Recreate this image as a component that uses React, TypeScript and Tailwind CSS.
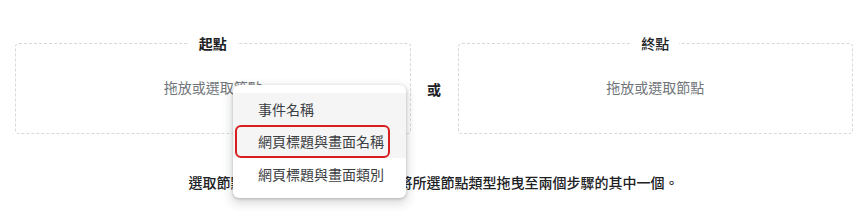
import React from "react";

const font = { fontFamily: '"Noto Sans CJK TC", "Noto Sans", sans-serif' };

function DropBox({ label, bold }: { label: string; bold?: boolean }) {
  return (
    <fieldset className="flex-1 rounded border border-dashed border-[#d6d8db] h-[101px]">
      <legend
        className={`mx-auto px-[10px] text-[14px] leading-[20px] text-[#202124] ${
          bold ? "font-bold" : "font-medium"
        }`}
      >
        {label}
      </legend>
      <div className="flex h-[80px] items-center justify-center pb-[12px] text-[14px] text-[#70757a]">
        拖放或選取節點
      </div>
    </fieldset>
  );
}

export default function App() {
  return (
    <div className="relative h-[219px] w-[867px] overflow-hidden bg-white" style={font}>
      <div className="flex items-start pl-[15px] pr-[14px] pt-[33px]">
        <DropBox label="起點" bold />
        <div className="flex w-[47px] shrink-0 justify-center pt-[46px] text-[14px] font-bold text-[#202124]">
          或
        </div>
        <DropBox label="終點" />
      </div>
      <p className="mt-[38px] text-center text-[14px] font-medium leading-[20px] text-[#202124]">
        選取節點類型後點選任一步驟，或將所選節點類型拖曳至兩個步驟的其中一個。
      </p>

      {/* dropdown menu over the start box */}
      <div className="absolute left-[233px] top-[85px] w-[173px] rounded-md bg-white py-2 text-[14px] text-[#3c4043] shadow-[0_1px_3px_rgba(60,64,67,0.3),0_4px_8px_3px_rgba(60,64,67,0.15)]">
        <div className="flex h-[32px] items-center bg-[#f5f5f5] pl-[25px]">事件名稱</div>
        <div className="relative flex h-[33px] items-center bg-[#f5f5f5] pl-[25px]">
          網頁標題與畫面名稱
          <div className="absolute left-[2px] right-[16px] top-0 bottom-0 rounded-md border-2 border-[#d81e1e]" />
        </div>
        <div className="flex h-[32px] items-center pl-[25px]">網頁標題與畫面類別</div>
      </div>
    </div>
  );
}
